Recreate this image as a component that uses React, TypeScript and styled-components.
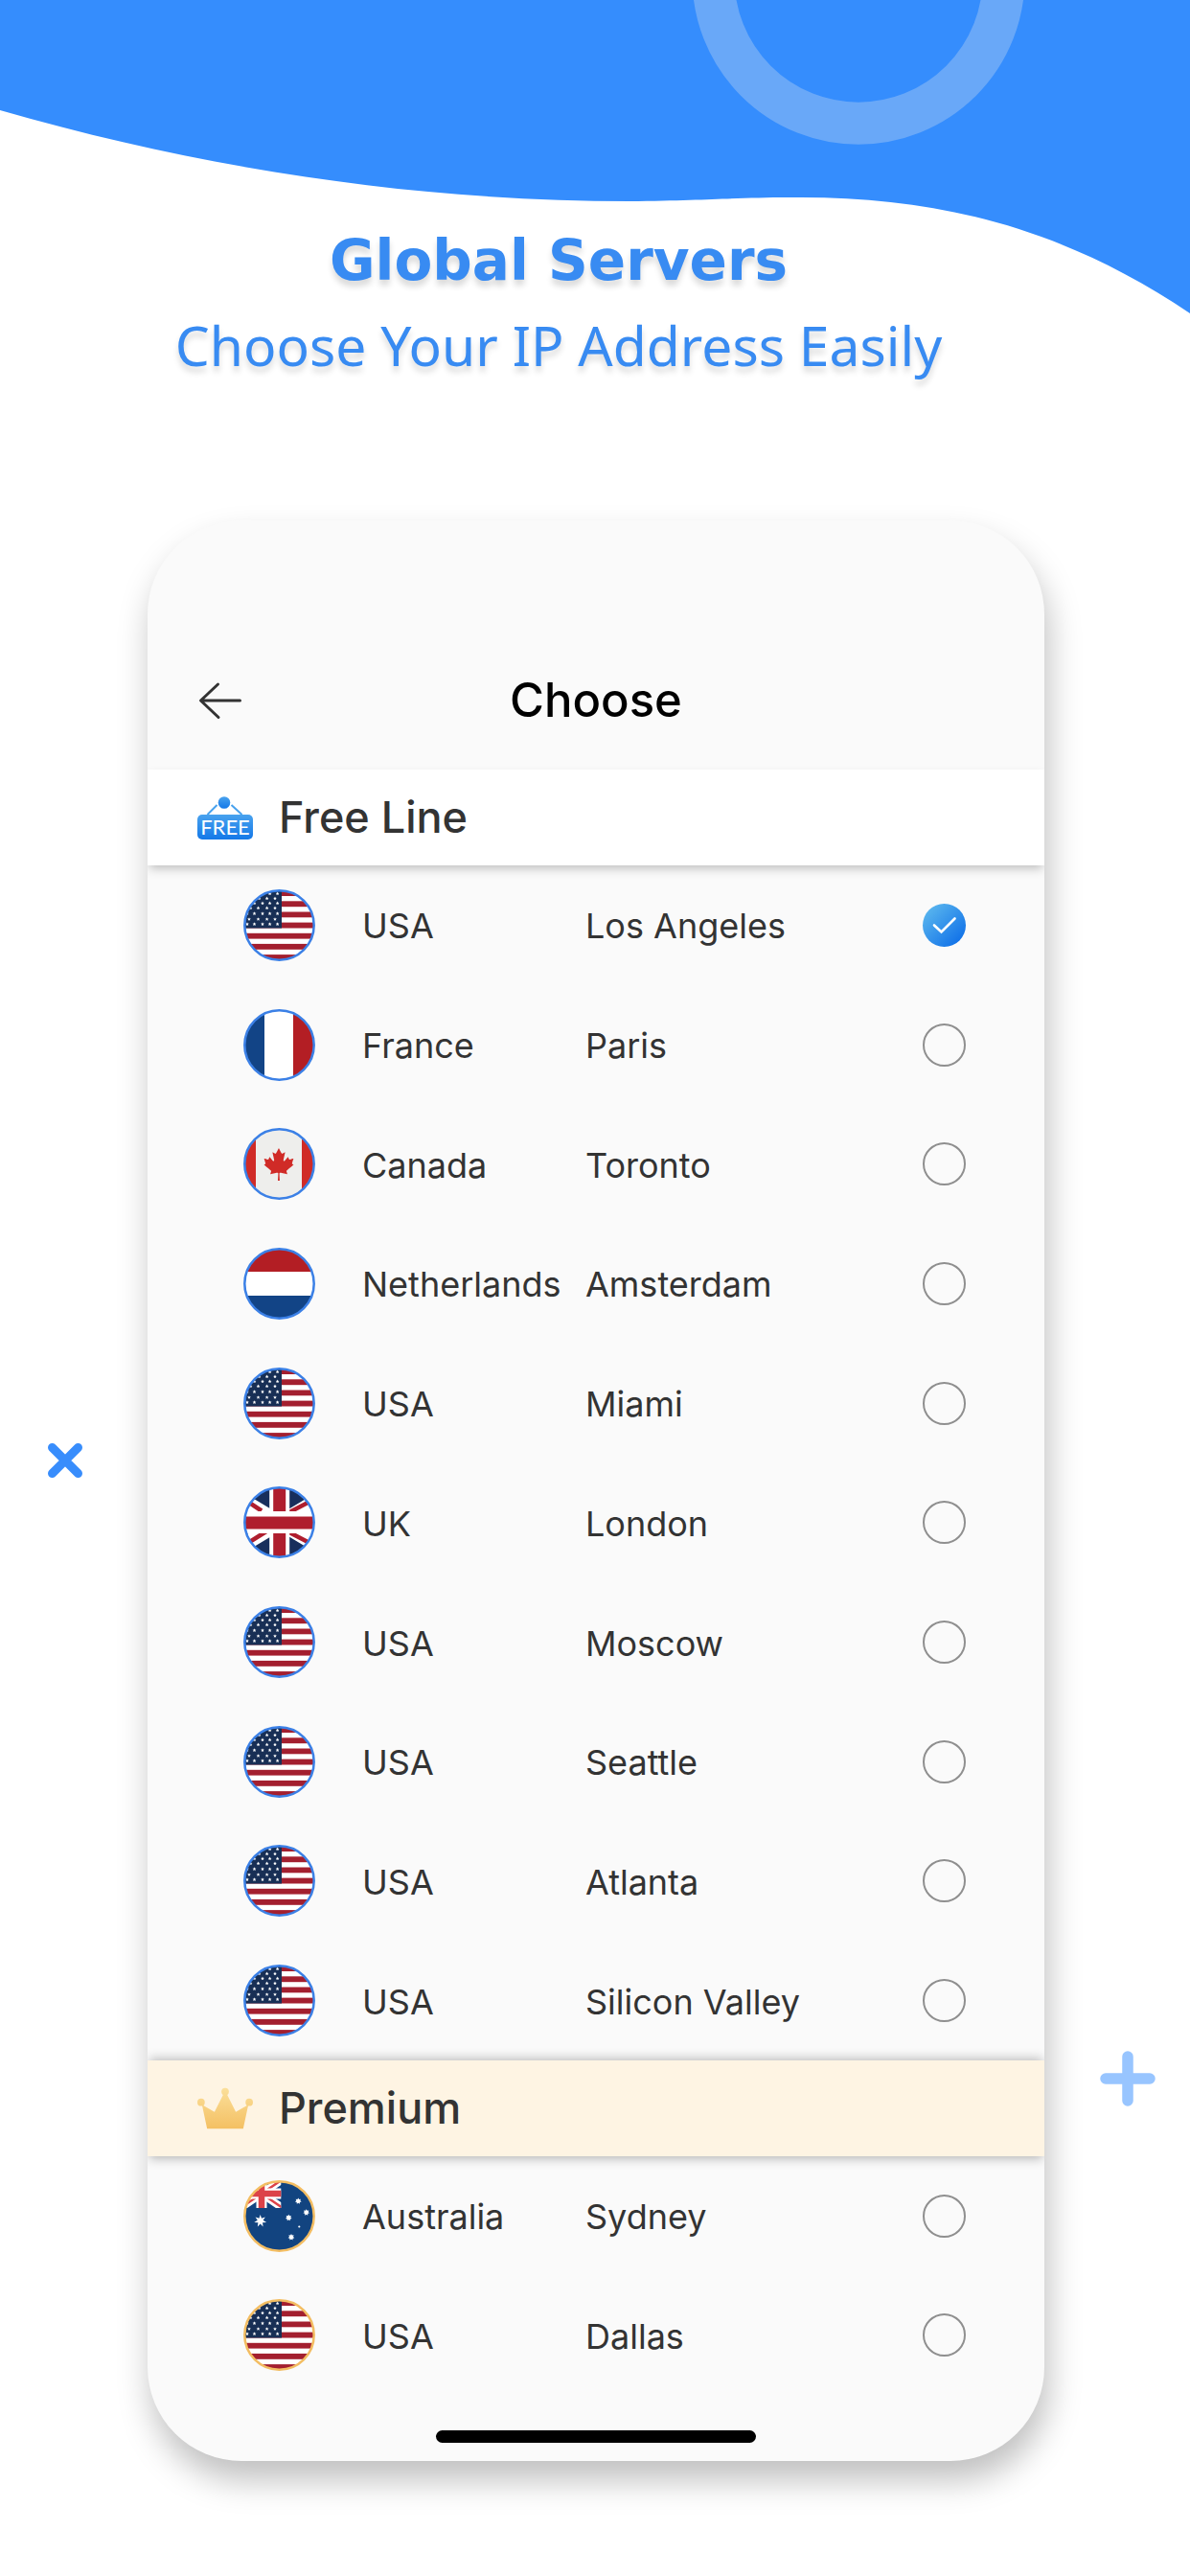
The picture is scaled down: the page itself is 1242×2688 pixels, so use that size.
import React, { useState } from "react";
import styled, { createGlobalStyle, css } from "styled-components";
import { FaCanadianMapleLeaf } from "react-icons/fa";

const GlobalStyle = createGlobalStyle`
  *, *::before, *::after { box-sizing: border-box; }
  body { margin: 0; background: #fff; }
`;

const uiFont = css`
  font-family: Inter, Roboto, "Liberation Sans", sans-serif;
`;

const Page = styled.div`
  position: relative;
  min-height: 100vh;
  padding-bottom: 120px;
  overflow: hidden;
  color: #333;
`;

const Wave = styled.svg`
  position: absolute;
  top: 0;
  left: 0;
  width: 100%;
  height: auto;
`;

const Hero = styled.header`
  position: relative;
  display: flex;
  flex-direction: column;
  align-items: center;
  gap: 8px;
  padding: 232px 76px 0 0;
  color: #388bf2;
  text-align: center;
  text-shadow: 0 6px 6px rgba(0, 0, 0, 0.15);
`;

const Headline = styled.h1`
  margin: 0;
  font: 700 58px/80px "DejaVu Sans", "Liberation Sans", sans-serif;
`;

const Tagline = styled.p`
  margin: 0;
  font: 400 57px/80px "Noto Sans", sans-serif;
`;

const Stage = styled.main`
  position: relative;
  margin-top: 143px;
  padding-left: 2px;
`;

const CrossMark = styled.svg`
  position: absolute;
  left: 50px;
  top: 963px;
`;

const PlusMark = styled.svg`
  position: absolute;
  right: 36px;
  top: 1597px;
`;

const Phone = styled.div`
  ${uiFont}
  width: min(936px, 100% - 48px);
  margin: 0 auto;
  overflow: hidden;
  border-radius: 98px;
  background: #fafafa;
  box-shadow: 4px 20px 34px rgba(0, 0, 0, 0.25);
`;

const NavBar = styled.div`
  display: grid;
  grid-template-columns: 1fr auto 1fr;
  align-items: center;
  height: 260px;
  padding: 116px 50px 0;
`;

const BackButton = styled.button`
  display: flex;
  justify-self: start;
  padding: 0;
  border: 0;
  background: none;
`;

const Title = styled.h2`
  margin: 0;
  color: #000;
  font-size: 49px;
  line-height: 64px;
  font-weight: 500;
`;

const SectionBar = styled.div<{ $premium?: boolean }>`
  position: relative;
  display: flex;
  align-items: center;
  gap: 27px;
  height: 100px;
  padding: 0 52px;
  background: ${(p) => (p.$premium ? "#fef4e3" : "#fff")};
  box-shadow: 0 5px 10px -2px rgba(0, 0, 0, 0.25)
    ${(p) => p.$premium && ", 0 -5px 10px -2px rgba(0, 0, 0, 0.2)"};
`;

const SectionTitle = styled.h3`
  margin: 0;
  font-size: 45px;
  line-height: 64px;
  font-weight: 500;
`;

const List = styled.ul<{ $minHeight: number }>`
  display: grid;
  grid-auto-rows: 1fr;
  min-height: ${(p) => p.$minHeight}px;
  margin: 0;
  padding: 0;
  list-style: none;
`;

const Row = styled.label`
  display: grid;
  grid-template-columns: 75px 233px 1fr 45px;
  align-items: center;
  height: 100%;
  padding: 0 82px 0 100px;
  cursor: pointer;
`;

const Name = styled.span`
  padding: 2px 0 0 49px;
  font-size: 36px;
  line-height: 48px;
  white-space: nowrap;
`;

const RadioBox = styled.span`
  display: grid;
  width: 45px;
  height: 45px;
  & > * { grid-area: 1 / 1; }
`;

const Radio = styled.input`
  appearance: none;
  width: 45px;
  height: 45px;
  margin: 0;
  border: 2px solid #8f8f8f;
  border-radius: 50%;
  &:checked {
    border: 0;
    background: linear-gradient(135deg, #5ab6ee 10%, #0f70e8 90%);
  }
`;

const Tick = styled.svg`
  pointer-events: none;
`;

const Footer = styled.div`
  display: flex;
  justify-content: center;
  padding: 37px 0 19px;
`;

const HomeIndicator = styled.div`
  width: 334px;
  height: 13px;
  border-radius: 7px;
  background: #000;
`;

function star(cx: number, cy: number, r: number, points = 5, inner = 0.45) {
  const out: string[] = [];
  for (let i = 0; i < points * 2; i++) {
    const a = -Math.PI / 2 + (i * Math.PI) / points;
    const k = i % 2 ? r * inner : r;
    out.push(`${(cx + k * Math.cos(a)).toFixed(2)},${(cy + k * Math.sin(a)).toFixed(2)}`);
  }
  return out.join(" ");
}

const starRows: [number, number[]][] = [
  [4.5, [20, 27.6, 35.6]],
  [9.5, [16.5, 24.6, 33]],
  [14.5, [11.5, 20, 27.6, 35.6]],
  [19.5, [7.5, 15.5, 24.6, 33]],
  [25.3, [4, 11.5, 20, 27.6, 35.6]],
  [31.2, [6, 15.5, 24.6, 33]],
  [36.3, [4, 11.5, 20, 27.6, 35.6]],
];

function UsaArt() {
  return (
    <>
      <rect width="75" height="75" fill="#a31f2f" />
      {[7, 18.2, 29.3, 40.5, 51.6, 62.8].map((y) => (
        <rect key={y} y={y} width="75" height="5.3" fill="#fff" />
      ))}
      <rect width="40" height="40.5" fill="#182f55" />
      {starRows.map(([y, xs]) =>
        xs.map((x) => <polygon key={`${x}-${y}`} points={star(x, y, 2)} fill="#fff" />)
      )}
    </>
  );
}

function FranceArt() {
  return (
    <>
      <rect width="75" height="75" fill="#fff" />
      <rect width="22" height="75" fill="#124486" />
      <rect x="52" width="23" height="75" fill="#b31e24" />
    </>
  );
}

function CanadaArt() {
  return (
    <>
      <rect width="75" height="75" fill="#eeeeec" />
      <rect width="13" height="75" fill="#d02b27" />
      <rect x="61" width="14" height="75" fill="#d02b27" />
      <FaCanadianMapleLeaf x={20} y={21} size={34} color="#d02b27" />
    </>
  );
}

function NetherlandsArt() {
  return (
    <>
      <rect width="75" height="75" fill="#fff" />
      <rect width="75" height="25" fill="#b31e24" />
      <rect y="50" width="75" height="25" fill="#124486" />
    </>
  );
}

function UkArt() {
  return (
    <>
      <rect width="75" height="75" fill="#182f5c" />
      <path d="M-12 8L88 68M88 8L-12 68" stroke="#fff" strokeWidth="15" />
      <path d="M0 13L19 25.500M75 13L48 27M0 62L24 47M75 62L48 48" stroke="#af1e2e" strokeWidth="4.500" />
      <path d="M37.7 0V75" stroke="#fff" strokeWidth="21" />
      <path d="M37.7 0V75" stroke="#af1e2e" strokeWidth="13" />
      <path d="M0 37.5H75" stroke="#fff" strokeWidth="23" />
      <path d="M0 38H75" stroke="#af1e2e" strokeWidth="13" />
    </>
  );
}

function AustraliaArt() {
  return (
    <>
      <rect width="75" height="75" fill="#124480" />
      <svg width="39.3" height="29" viewBox="0 0 39.3 29">
        <path d="M-3 -1L41 29M41 -1L-3 29" stroke="#fff" strokeWidth="8" />
        <path d="M-3 -1L41 29M41 -1L-3 29" stroke="#dc4349" strokeWidth="2.4" />
        <path d="M19 0V29M0 14H40" stroke="#fff" strokeWidth="11" />
        <path d="M19 0V29M0 14H40" stroke="#dc4349" strokeWidth="6.5" />
      </svg>
      <polygon points={star(17.7, 42.5, 6.6, 7)} fill="#fff" />
      <polygon points={star(57.3, 21.8, 3.4, 7, 0.6)} fill="#fff" />
      <polygon points={star(65.7, 33.6, 3.4, 7, 0.6)} fill="#fff" />
      <polygon points={star(47.3, 39.2, 3.4, 7, 0.6)} fill="#fff" />
      <polygon points={star(50, 59.4, 3.4, 7, 0.6)} fill="#fff" />
      <circle cx="58.3" cy="48.5" r="1.1" fill="#fff" />
    </>
  );
}

const art: Record<string, () => React.JSX.Element> = {
  USA: UsaArt,
  France: FranceArt,
  Canada: CanadaArt,
  Netherlands: NetherlandsArt,
  UK: UkArt,
  Australia: AustraliaArt,
};

function Flag({ country, ring }: { country: string; ring: string }) {
  const Art = art[country];
  return (
    <svg width="75" height="75" viewBox="0 0 75 75" aria-hidden="true">
      <g clipPath="url(#flag-disc)">
        <Art />
      </g>
      <circle cx="37.5" cy="37.5" r="36.2" fill="none" stroke={ring} strokeWidth="2.5" />
    </svg>
  );
}

function FreeIcon() {
  return (
    <svg width="58" height="46" viewBox="0 0 58 46" aria-hidden="true">
      <defs>
        <linearGradient id="free-blue" x1="0" y1="0" x2="0" y2="1">
          <stop offset="0" stopColor="#48a2ee" />
          <stop offset="1" stopColor="#1478e8" />
        </linearGradient>
      </defs>
      <path d="M20.500 10L10.500 20M35.500 10L46.500 20" stroke="#48a2ee" strokeWidth="2" />
      <circle cx="28" cy="7.500" r="6.300" fill="url(#free-blue)" />
      <rect y="20" width="58" height="26" rx="5" fill="url(#free-blue)" />
      <text x="29" y="41" textAnchor="middle" fill="#fff" fontFamily="Lato, sans-serif" fontSize="22">
        FREE
      </text>
    </svg>
  );
}

function CrownIcon() {
  return (
    <svg width="58" height="44" viewBox="0 0 60 44" aria-hidden="true">
      <defs>
        <linearGradient id="crown-gold" gradientUnits="userSpaceOnUse" x1="0" y1="0" x2="0" y2="44">
          <stop offset="0" stopColor="#fbdf9a" />
          <stop offset="1" stopColor="#f4c063" />
        </linearGradient>
      </defs>
      <g fill="url(#crown-gold)">
        <circle cx="4" cy="15.500" r="4" />
        <circle cx="30" cy="4" r="4" />
        <circle cx="56" cy="15.500" r="4" />
        <path d="M5 18L18.500 26L28.500 6H31.500L41.500 26L55 18L49.500 44H10.500Z" />
      </g>
    </svg>
  );
}

type Server = { country: string; city: string };

const freeServers: Server[] = [
  { country: "USA", city: "Los Angeles" },
  { country: "France", city: "Paris" },
  { country: "Canada", city: "Toronto" },
  { country: "Netherlands", city: "Amsterdam" },
  { country: "USA", city: "Miami" },
  { country: "UK", city: "London" },
  { country: "USA", city: "Moscow" },
  { country: "USA", city: "Seattle" },
  { country: "USA", city: "Atlanta" },
  { country: "USA", city: "Silicon Valley" },
];

const premiumServers: Server[] = [
  { country: "Australia", city: "Sydney" },
  { country: "USA", city: "Dallas" },
];

export default function App() {
  const [selected, setSelected] = useState("Los Angeles");

  const renderRow = (server: Server, ring: string) => (
    <li key={server.city}>
      <Row>
        <Flag country={server.country} ring={ring} />
        <Name>{server.country}</Name>
        <Name>{server.city}</Name>
        <RadioBox>
          <Radio
            type="radio"
            name="server"
            value={server.city}
            checked={selected === server.city}
            onChange={() => setSelected(server.city)}
          />
          {selected === server.city && (
            <Tick width="45" height="45" viewBox="0 0 45 45" aria-hidden="true">
              <path
                d="M12 22.500L19.500 29.500L33.500 15.500"
                fill="none"
                stroke="#fff"
                strokeWidth="2.600"
                strokeLinecap="round"
              />
            </Tick>
          )}
        </RadioBox>
      </Row>
    </li>
  );

  return (
    <Page>
      <GlobalStyle />
      <svg width="0" height="0" style={{ position: "absolute" }} aria-hidden="true">
        <clipPath id="flag-disc">
          <circle cx="37.5" cy="37.5" r="36.500" />
        </clipPath>
      </svg>
      <Wave viewBox="0 0 1242 328" aria-hidden="true">
        <path d="M0 0H1242V327C1110 238 978 204 824 206C770 206 745 209 657 210C450 210 225 180 0 115Z" fill="#358dfd" />
        <circle cx="896" cy="-22.800" r="151.500" fill="none" stroke="#69a8f8" strokeWidth="44" />
      </Wave>
      <Hero>
        <Headline>Global Servers</Headline>
        <Tagline>Choose Your IP Address Easily</Tagline>
      </Hero>
      <Stage>
        <CrossMark width="36" height="36" viewBox="0 0 36 36" aria-hidden="true">
          <path d="M4.500 4.500L31.500 31.500M31.500 4.500L4.500 31.500" stroke="#388dfc" strokeWidth="9" strokeLinecap="round" />
        </CrossMark>
        <PlusMark width="58" height="58" viewBox="0 0 58 58" aria-hidden="true">
          <path d="M6 29H52M29 6V52" stroke="#98c5ff" strokeWidth="11.500" strokeLinecap="round" />
        </PlusMark>
        <Phone>
          <NavBar>
            <BackButton type="button" aria-label="Back">
              <svg width="50" height="44" viewBox="0 0 50 44" fill="none" stroke="#333" strokeWidth="3" strokeLinecap="round" strokeLinejoin="round" aria-hidden="true">
                <path d="M23.500 5L5.500 22L24 39.500M6 22H46.500" />
              </svg>
            </BackButton>
            <Title>Choose</Title>
          </NavBar>
          <SectionBar>
            <FreeIcon />
            <SectionTitle>Free Line</SectionTitle>
          </SectionBar>
          <List $minHeight={1247}>{freeServers.map((s) => renderRow(s, "#3b80e6"))}</List>
          <SectionBar $premium>
            <CrownIcon />
            <SectionTitle>Premium</SectionTitle>
          </SectionBar>
          <List $minHeight={249}>{premiumServers.map((s) => renderRow(s, "#f3bd62"))}</List>
          <Footer>
            <HomeIndicator />
          </Footer>
        </Phone>
      </Stage>
    </Page>
  );
}
